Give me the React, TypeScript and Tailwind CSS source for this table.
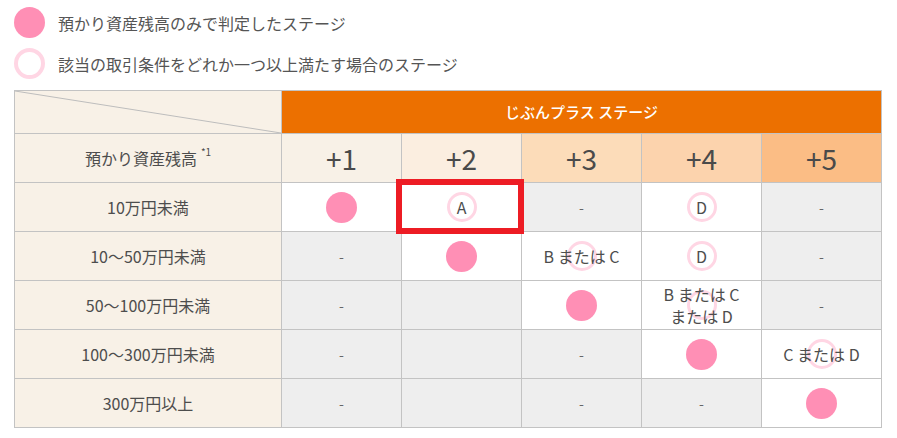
const font = { fontFamily: '"Noto Sans CJK JP", "Noto Sans", sans-serif' };

type Cell = { kind: "dot" | "ring" | "dash" | "empty"; text?: string; lines?: string[]; white: boolean };

const stages = [
  { label: "+1", bg: "bg-[#f8f1e7]" },
  { label: "+2", bg: "bg-[#fbeee0]" },
  { label: "+3", bg: "bg-[#fcdcb9]" },
  { label: "+4", bg: "bg-[#fcd3ad]" },
  { label: "+5", bg: "bg-[#fbbd85]" },
];

const rows: { label: string; cells: Cell[] }[] = [
  {
    label: "10万円未満",
    cells: [
      { kind: "dot", white: true },
      { kind: "ring", text: "A", white: true },
      { kind: "dash", white: false },
      { kind: "ring", text: "D", white: true },
      { kind: "dash", white: false },
    ],
  },
  {
    label: "10〜50万円未満",
    cells: [
      { kind: "dash", white: false },
      { kind: "dot", white: true },
      { kind: "ring", text: "B または C", white: true },
      { kind: "ring", text: "D", white: true },
      { kind: "dash", white: false },
    ],
  },
  {
    label: "50〜100万円未満",
    cells: [
      { kind: "dash", white: false },
      { kind: "empty", white: false },
      { kind: "dot", white: true },
      { kind: "ring", lines: ["B または C", "または D"], white: true },
      { kind: "dash", white: false },
    ],
  },
  {
    label: "100〜300万円未満",
    cells: [
      { kind: "dash", white: false },
      { kind: "empty", white: false },
      { kind: "dash", white: false },
      { kind: "dot", white: true },
      { kind: "ring", text: "C または D", white: true },
    ],
  },
  {
    label: "300万円以上",
    cells: [
      { kind: "dash", white: false },
      { kind: "empty", white: false },
      { kind: "dash", white: false },
      { kind: "dash", white: false },
      { kind: "dot", white: true },
    ],
  },
];

function Dot() {
  return <span className="block w-[31px] h-[31px] rounded-full bg-[#ff8fb5]" />;
}

function DataCell({ c }: { c: Cell }) {
  return (
    <div
      className={`relative flex items-center justify-center h-[48px] text-[16px] text-[#4d4d4d] ${
        c.white ? "bg-white" : "bg-[#eeeeee]"
      }`}
    >
      {c.kind === "dot" && <Dot />}
      {c.kind === "dash" && <span className="text-[14px] text-[#666]">-</span>}
      {c.kind === "ring" && (
        <>
          <span className="absolute left-1/2 top-1/2 -translate-x-1/2 -translate-y-1/2 w-[30px] h-[30px] rounded-full border-[3px] border-[#ffd6e4]" />
          <span className="relative text-center leading-[22px]">
            {c.lines ? c.lines.map((l) => <div key={l}>{l}</div>) : c.text}
          </span>
        </>
      )}
    </div>
  );
}

export default function App() {
  return (
    <div className="w-[897px] h-[438px] bg-white px-[14px] pt-[7px] text-[#555]" style={font}>
      {/* legend */}
      <div className="flex items-center gap-[13px] h-[31px]">
        <Dot />
        <span className="text-[16px]">預かり資産残高のみで判定したステージ</span>
      </div>
      <div className="flex items-center gap-[13px] h-[31px] mt-[10px]">
        <span className="block w-[31px] h-[31px] rounded-full border-[4px] border-[#ffd6e4]" />
        <span className="text-[16px]">該当の取引条件をどれか一つ以上満たす場合のステージ</span>
      </div>

      <div className="relative mt-[11px] w-[868px]">
        <div className="grid grid-cols-[266px_repeat(5,119px)] gap-px p-px bg-[#c3c3c3]">
          <div className="relative h-[42px] bg-[#f8f1e7]">
            <svg className="absolute inset-0 w-full h-full" viewBox="0 0 266 42" preserveAspectRatio="none">
              <line x1="0" y1="0" x2="266" y2="42" stroke="#bdbdbd" strokeWidth="1" />
            </svg>
          </div>
          <div className="col-span-5 flex items-center justify-center h-[42px] bg-[#ec7000] text-white text-[15px] font-medium">
            じぶんプラス ステージ
          </div>

          <div className="flex items-center justify-center h-[48px] bg-[#f8f1e7] text-[16px] text-[#4d4d4d]">
            預かり資産残高<sup className="ml-[4px] text-[10px] -top-[6px]">*1</sup>
          </div>
          {stages.map((s) => (
            <div key={s.label} className={`flex items-center justify-center h-[48px] text-[28px] text-[#4a4a4a] ${s.bg}`}>
              {s.label}
            </div>
          ))}

          {rows.map((r) => (
            <div key={r.label} className="contents">
              <div className="flex items-center justify-center h-[48px] bg-[#f8f1e7] text-[16px] text-[#4d4d4d]">
                {r.label}
              </div>
              {r.cells.map((c, i) => (
                <DataCell key={i} c={c} />
              ))}
            </div>
          ))}
        </div>

        {/* highlight box */}
        <div className="absolute left-[382px] top-[89px] w-[128px] h-[55px] border-[6px] border-[#ed1c24]" />
      </div>
    </div>
  );
}
